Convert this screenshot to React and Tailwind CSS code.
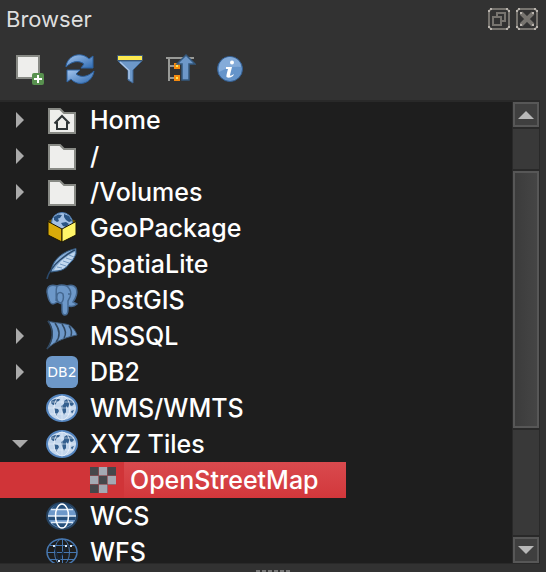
import React from "react";

const svgProps = { width: 32, height: 32, viewBox: "0 0 32 32", "aria-hidden": true, className: "shrink-0" };

const FOLDER = "M3 5H14L18 9H29V29H3Z";

const FolderIcon = () => (
  <svg {...svgProps}>
    <path d={FOLDER} fill="#eeeeec" stroke="#888a85" strokeWidth="2" />
  </svg>
);

const HomeIcon = () => (
  <svg {...svgProps}>
    <path d={FOLDER} fill="#eeeeec" stroke="#888a85" strokeWidth="2" />
    <path d="M8.5 19.5L16 12L23.500 19.5M11 18V25H21V18" fill="none" stroke="#2e3436" strokeWidth="2" />
  </svg>
);

const GeoPackageIcon = () => (
  <svg {...svgProps}>
    <path d="M2 9L9 6H23L30 9L16 17Z" fill="#6b5300" />
    <circle cx="16" cy="11" r="10.500" fill="#a3c0e4" stroke="#4a78ae" />
    <path d="M8 5L12 2.500L16 3L14 6L12 6.500L13 9L11 10L8 8ZM18 2L23 4L26 9L23 10L20 8L18 5ZM15 11L20 10L23 12L20 15L17 14Z" fill="#2a5483" />
    <path d="M2 9.500L16 17V30L2 23Z" fill="#d9ab0a" stroke="#1b1500" />
    <path d="M30 9.500L16 17V30L30 23Z" fill="#fff568" stroke="#1b1500" />
  </svg>
);

const FeatherIcon = () => (
  <svg {...svgProps}>
    <path d="M30 0.500C18 3 6 11 5 24L12 23C18 22 21 19 23 16L27 12L30 6Z" fill="#86acd5" stroke="#34597f" />
    <path d="M8 22H13C18 21 21 18 23 15L28 9L29 4C20 8 12 15 8 22Z" fill="#c2d8ee" />
    <path d="M11 19L16 20M14 16L20 18M17 13L23 15M20 10L26 12M23 7L28 9" fill="none" stroke="#7399c2" />
    <path d="M1 31C2 25 8 17 14 12C19 8 24 4 29 2" fill="none" stroke="#2b4a6c" strokeWidth="1.500" />
  </svg>
);

const ElephantIcon = () => (
  <svg {...svgProps}>
    <path d="M11 2C5 0 1 2 1 8C2 14 4 20 7 20C9 20 10 18 12 18L16 20V26C16 29 17 31 19 31C22 31 22 28 22 25V22C26 23 29 22 31 20L27 18C30 14 32 8 30 4C28 1 24 1 21 2C17 0.500 14 0.500 11 2Z" fill="#6d98c9" stroke="#44678f" strokeWidth="1.500" />
    <path d="M11 2C9 7 11 12 10 17M11 11C12 8 15 8 17 10C18 14 17 18 15 19C12 19 10 16 11 11M21 2C24 5 26 9 24 13L22 17V21M22 10L25 10" fill="none" stroke="#44678f" strokeWidth="1.500" />
  </svg>
);

const MssqlIcon = () => (
  <svg {...svgProps}>
    <path d="M2 1C8 3 18 3 23 5C28 8 30 12 31 15C22 17 10 20 1 29C7 20 9 11 2 1Z" fill="#6d98c9" stroke="#3d5875" />
    <path d="M9 3C14 10 14 17 10 22M16 4C20 10 20 15 18 18M23 6C26 10 26 13 25 16" fill="none" stroke="#30475f" strokeWidth="1.500" />
    <path d="M2 1C9 11 7 20 1 29" fill="none" stroke="#30475f" strokeWidth="1.500" />
  </svg>
);

const Db2Icon = () => (
  <span className="flex size-8 shrink-0 items-center justify-center rounded-md bg-[#6d98c9] font-['DejaVu_Sans',sans-serif] text-[14px] leading-4 text-white">
    DB2
  </span>
);

const WorldIcon = () => (
  <svg {...svgProps}>
    <ellipse cx="16" cy="16" rx="15" ry="13" fill="#c3d6ec" stroke="#5586c0" strokeWidth="2" />
    <path d="M5 9L9 7L14 7L13 9L11 10L9 13L7 13L5 11ZM8 16L12 17L13 19L10 24L9 21ZM18 9L21 7L26 9L28 12L26 14L23 13L22 16L20 14L20 20L18 23L16 18L15 14L18 12ZM25 19L28 18L26 22Z" fill="#35608f" />
    <path d="M4 10H28M2 16H30M4 22H28M16 4V28" fill="none" stroke="#e4eefa" strokeOpacity=".6" />
    <ellipse cx="16" cy="16" rx="8" ry="12" fill="none" stroke="#edf3fb" strokeOpacity=".8" />
  </svg>
);

const WcsIcon = () => (
  <svg {...svgProps}>
    <ellipse cx="16" cy="16" rx="15" ry="13" fill="#6d98c9" stroke="#25415e" strokeWidth="2" />
    <path d="M9 5C13 3 19 3 23 5L27 9H5ZM2 16H30L29 20H3ZM6 23H26C22 29 10 29 6 23Z" fill="#27507b" />
    <path d="M5 9.500H27M2 16H30M5 22.500H27" fill="none" stroke="#dce8f5" strokeWidth="1.500" />
    <ellipse cx="16" cy="16" rx="6.500" ry="12" fill="none" stroke="white" strokeWidth="1.500" />
  </svg>
);

const WfsIcon = () => (
  <svg {...svgProps}>
    <g fill="none" stroke="#4677b0">
      <ellipse cx="16" cy="16" rx="15" ry="13" strokeWidth="1.500" />
      <ellipse cx="16" cy="16" rx="7.500" ry="13" />
      <path d="M4 9.500H28M1 16.500H31M4 23.500H28M16.500 3V29" />
    </g>
    <path d="M8 10L13 25L20 10H25" fill="none" stroke="#182a3f" strokeWidth="1.500" />
    <path d="M7 9h2v2H7zM19 9h2v2H19zM24 9h2v2H24zM12 24h2v2H12z" fill="#dce8f5" />
  </svg>
);

const TileIcon = () => (
  <svg {...svgProps}>
    <path d="M3 3H29V21H21V29H3Z" fill="#a4a9b3" />
    <path d="M3 3h9v9H3zM20 3h9v9H20zM12 12h8v8H12zM3 20h9v9H3z" fill="#46474b" />
    <path d="M11.500 3V29M20.500 3V29M3 11.500H29M3 20.500H29" stroke="#8d4b51" strokeOpacity=".7" />
  </svg>
);

const AddIcon = () => (
  <svg {...svgProps}>
    <path d="M3 3H25V25H3Z" fill="#eeeeec" stroke="#888a85" strokeWidth="2" />
    <rect x="18" y="20" width="12" height="12" rx="2" fill="#58914f" />
    <path d="M24 22V30M20 26H28" stroke="white" strokeWidth="2" />
  </svg>
);

const RefreshIcon = () => (
  <svg {...svgProps}>
    <defs>
      <linearGradient id="blue" x1="0" y1="0" x2="1" y2="1">
        <stop offset="0" stopColor="#a4c5ed" />
        <stop offset="1" stopColor="#2f6bb2" />
      </linearGradient>
    </defs>
    <path d="M2 13C4 2 17-2 25 6L29 3V15H17L20 11C15 7 8 8 2 14Z" fill="url(#blue)" stroke="#2d62a1" />
    <path d="M30 18C28 31 14 34 7 26L3 29V17H16L12 21C17 25 24 24 30 18Z" fill="url(#blue)" stroke="#2d62a1" />
  </svg>
);

const FilterIcon = () => (
  <svg {...svgProps}>
    <path d="M4 8H28L19 17V30L14 27V17Z" fill="#6d98c9" stroke="#3d6593" />
    <path d="M6 9L15 17.500V26" fill="none" stroke="#a9c5e8" strokeWidth="1.500" />
    <path d="M3.500 2.500H28.500V7.500H3.500Z" fill="#fce94f" stroke="#3d5875" />
  </svg>
);

const CollapseIcon = () => (
  <svg {...svgProps}>
    <path d="M2 5H30M5 5V28M5 13H11M5 25H11" fill="none" stroke="#999a97" strokeWidth="2" />
    <path d="M10 10h6v6h-6zM10 22h6v6h-6z" fill="#f58a10" />
    <path d="M12 12h2v2h-2zM12 24h2v2h-2z" fill="#fce94f" />
    <path d="M22 2L31 11H25V27H18V11H13Z" fill="#6d98c9" stroke="#34597f" strokeWidth="1.500" />
  </svg>
);

const InfoIcon = () => (
  <svg {...svgProps}>
    <circle cx="16" cy="16" r="12.500" fill="#6594ca" stroke="#335e91" />
    <path d="M5 16A11 11 0 0 1 27 14Q16 13 5 19Z" fill="#84abd9" />
    <circle cx="18" cy="9.500" r="2" fill="white" />
    <path d="M12 14H18L16 22Q16 24 20 21L19 23Q15 26 12.500 24Q12 23 14 16H12Z" fill="white" />
  </svg>
);

const FloatIcon = () => (
  <svg width="22" height="22" viewBox="0 0 22 22" aria-hidden="true">
    <path d="M3 1H19L21 3V19L19 21H3L1 19V3Z" fill="none" stroke="#77746f" strokeWidth="2" />
    <path d="M5 9H13V17H5ZM9 8V5H17V13H14" fill="none" stroke="#77746f" strokeWidth="2" />
    <path d="M2 0h2v2H2zM18 0h2v2H18zM0 2h2v2H0zM20 2h2v2H20zM0 18h2v2H0zM20 18h2v2H20zM2 20h2v2H2zM18 20h2v2H18z" fill="#bab5af" />
  </svg>
);

const CloseIcon = () => (
  <svg width="22" height="22" viewBox="0 0 22 22" aria-hidden="true">
    <path d="M3 1H19L21 3V19L19 21H3L1 19V3Z" fill="none" stroke="#77746f" strokeWidth="2" />
    <path d="M5 5L17 17M17 5L5 17" fill="none" stroke="#77746f" strokeWidth="4" />
    <path d="M2 0h2v2H2zM18 0h2v2H18zM0 2h2v2H0zM20 2h2v2H20zM0 18h2v2H0zM20 18h2v2H20zM2 20h2v2H2zM18 20h2v2H18zM4 4h2v2H4zM16 4h2v2H16zM4 16h2v2H4zM16 16h2v2H16z" fill="#bab5af" />
  </svg>
);

const tools = [
  { label: "Add Selected Layers", Icon: AddIcon },
  { label: "Refresh", Icon: RefreshIcon },
  { label: "Filter Browser", Icon: FilterIcon },
  { label: "Collapse All", Icon: CollapseIcon },
  { label: "Enable Properties Widget", Icon: InfoIcon },
];

const items = [
  { label: "Home", Icon: HomeIcon, state: "closed" },
  { label: "/", Icon: FolderIcon, state: "closed" },
  { label: "/Volumes", Icon: FolderIcon, state: "closed" },
  { label: "GeoPackage", Icon: GeoPackageIcon },
  { label: "SpatiaLite", Icon: FeatherIcon },
  { label: "PostGIS", Icon: ElephantIcon },
  { label: "MSSQL", Icon: MssqlIcon, state: "closed" },
  { label: "DB2", Icon: Db2Icon, state: "closed" },
  { label: "WMS/WMTS", Icon: WorldIcon },
  { label: "XYZ Tiles", Icon: WorldIcon, state: "open", children: [{ label: "OpenStreetMap", Icon: TileIcon }] },
  { label: "WCS", Icon: WcsIcon },
  { label: "WFS", Icon: WfsIcon },
];

function Expander({ state, label }) {
  if (!state) return <span className="w-4 shrink-0" />;
  return (
    <button type="button" aria-label={label} aria-expanded={state === "open"} className="flex size-4 shrink-0 items-center justify-center">
      <svg width="16" height="16" viewBox="0 0 16 16" aria-hidden="true">
        <path d={state === "open" ? "M0 4H16L8 12Z" : "M4 0L12 8L4 16Z"} fill="#aaaaaa" />
      </svg>
    </button>
  );
}

function TreeItem({ item }) {
  const { label, Icon, state, children } = item;
  return (
    <li>
      <div className="flex h-9 items-center pl-3">
        <Expander state={state} label={label} />
        <span className="ml-[18px] mr-3 flex">
          <Icon />
        </span>
        <span>{label}</span>
      </div>
      {children && (
        <ul>
          {children.map((child) => (
            <li key={child.label} className="flex h-9 w-[346px] items-center bg-[#d03438]">
              <span className="ml-[87px] flex w-[37px]">
                <child.Icon />
              </span>
              <span className="flex h-full grow items-center bg-linear-to-b from-[#d94a4e] to-[#d2373b] pl-[6px]">{child.label}</span>
            </li>
          ))}
        </ul>
      )}
    </li>
  );
}

function ScrollArrow({ label, path, className }) {
  return (
    <button type="button" aria-label={label} className={"flex w-full shrink-0 items-center justify-center border-2 border-[#575757] bg-[#3f3f3f] " + className}>
      <svg width="16" height="8" viewBox="0 0 16 8" aria-hidden="true">
        <path d={path} fill="#b8b8b8" />
      </svg>
    </button>
  );
}

function ScrollBar() {
  return (
    <div className="flex w-7 shrink-0 flex-col gap-0.5 bg-[#292929] px-px">
      <ScrollArrow label="Scroll up" path="M0 8L8 0L16 8Z" className="h-[25px]" />
      <div className="grow-[40] basis-0 bg-[#393939]" />
      <div className="grow-[256] basis-0 border-2 border-[#575757] bg-linear-to-r from-[#3c3c3c] to-[#454545]" />
      <div className="grow-[106] basis-0 bg-[#393939]" />
      <ScrollArrow label="Scroll down" path="M0 0H16L8 8Z" className="h-[26px]" />
    </div>
  );
}

export default function App() {
  return (
    <main className="flex h-screen flex-col overflow-hidden bg-[#323232] font-['Inter',sans-serif] text-white">
      <header className="flex h-[38px] shrink-0 items-center justify-between pl-[6px] pr-2">
        <h1 className="text-[22px] leading-7 text-[#dedede]">Browser</h1>
        <div className="flex gap-[6px]">
          <button type="button" aria-label="Float panel"><FloatIcon /></button>
          <button type="button" aria-label="Close panel"><CloseIcon /></button>
        </div>
      </header>
      <div role="toolbar" aria-label="Browser tools" className="flex h-[62px] shrink-0 items-center gap-[18px] px-[14px]">
        {tools.map(({ label, Icon }) => (
          <button key={label} type="button" aria-label={label}>
            <Icon />
          </button>
        ))}
      </div>
      <section className="mr-[6px] flex min-h-0 grow border-b border-t-2 border-[#292929] bg-[#1e1e1e]">
        <ul className="min-w-0 grow overflow-hidden text-[25px] font-medium leading-9">
          {items.map((item) => (
            <TreeItem key={item.label} item={item} />
          ))}
        </ul>
        <ScrollBar />
      </section>
      <footer className="flex h-2 shrink-0 items-end justify-center gap-0.5">
        {[0, 1, 2, 3, 4, 5].map((dot) => (
          <span key={dot} className="h-0.5 w-1 bg-[#777777]" />
        ))}
      </footer>
    </main>
  );
}
